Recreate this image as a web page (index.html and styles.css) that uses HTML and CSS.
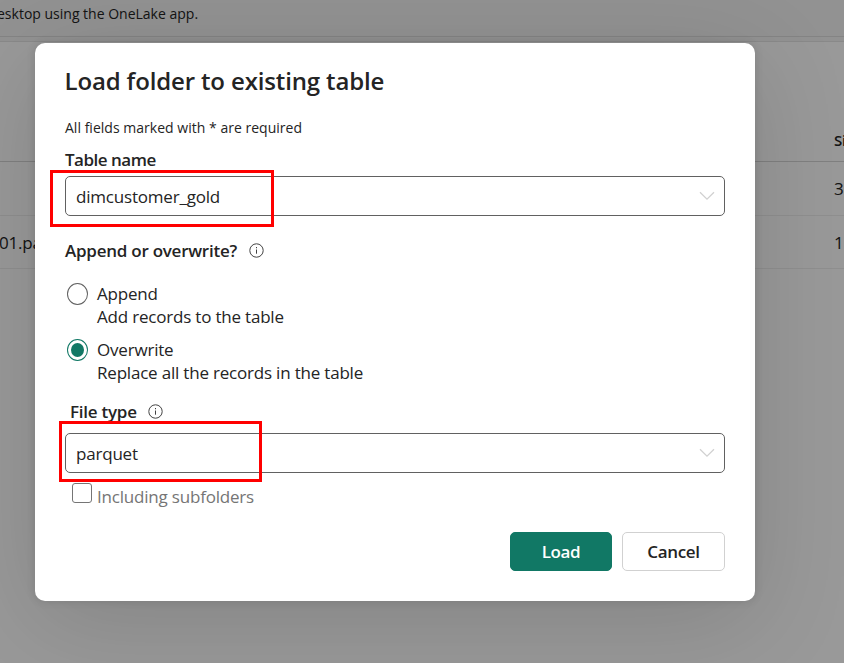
FILE: index.html
```html
<!DOCTYPE html>
<html lang="en">
<head>
<meta charset="utf-8">
<title>Load folder to existing table</title>
<link rel="stylesheet" href="styles.css">
</head>
<body>
<div class="page">
  <header class="notice"><span>esktop using the OneLake app.</span></header>
  <main class="files">
    <div class="row head"><span></span><span>Si</span></div>
    <div class="row first"><span></span><span>3</span></div>
    <div class="row second"><span class="name">01.pa</span><span>1</span></div>
  </main>
</div>
<div class="overlay">
  <section class="dialog" role="dialog" aria-labelledby="title">
    <h1 id="title">Load folder to existing table</h1>
    <p class="hint">All fields marked with * are required</p>
    <div class="label table-label">Table name</div>
    <div class="select">
      <span>dimcustomer_gold</span>
      <svg class="chevron" viewBox="0 0 16 10"><path d="M1 1.2 8 8.2 15 1.2"/></svg>
      <i class="mark mark-table"></i>
    </div>
    <div class="label mode-label"><span>Append or overwrite?</span>
      <svg class="info" viewBox="0 0 15 15"><circle cx="7.5" cy="7.5" r="6.7"/><path d="M7.5 6.5v4.2"/><path class="dot" d="M7 4.1h1v1.2H7z"/></svg>
    </div>
    <div class="option">
      <i class="radio"></i>
      <div><div>Append</div><div>Add records to the table</div></div>
    </div>
    <div class="option">
      <i class="radio checked"></i>
      <div><div>Overwrite</div><div>Replace all the records in the table</div></div>
    </div>
    <div class="label type-label"><span>File type</span>
      <svg class="info" viewBox="0 0 15 15"><circle cx="7.5" cy="7.5" r="6.7"/><path d="M7.5 6.5v4.2"/><path class="dot" d="M7 4.1h1v1.2H7z"/></svg>
    </div>
    <div class="select">
      <span>parquet</span>
      <svg class="chevron" viewBox="0 0 16 10"><path d="M1 1.2 8 8.2 15 1.2"/></svg>
      <i class="mark mark-type"></i>
    </div>
    <div class="check"><i class="box"></i><span>Including subfolders</span></div>
    <footer class="actions">
      <button class="btn primary">Load</button>
      <button class="btn">Cancel</button>
    </footer>
  </section>
</div>
</body>
</html>
```
FILE: styles.css
```css
* { box-sizing: border-box; }
html, body { height: 100%; }
body {
  margin: 0;
  overflow: hidden;
  font: 17px/23px "Open Sans", "Noto Sans", sans-serif;
  letter-spacing: -.2px;
  color: #242424;
}
.page {
  position: absolute;
  inset: 0;
  overflow: hidden;
  background: #f3f3f3;
}
.notice {
  height: 37px;
  padding: 2px 0 0;
  border-bottom: 1px solid #dcdcdc;
  background: #f3f3f3;
  font-size: 14px;
  letter-spacing: 0;
}
.notice span { display: inline-block; margin-left: -3px; }
.files {
  width: 860px;
  height: 640px;
  margin: 4px 0 0 -10px;
  padding-left: 9px;
  border: 1px solid #e4e4e4;
  background: #fff;
}
.row {
  display: grid;
  grid-template-columns: 834px 80px;
  align-items: center;
  border-bottom: 1px solid #efefef;
}
.row span { white-space: nowrap; }
.name { margin-left: -1px; }
.head { height: 120px; padding-top: 77px; border-color: #d6d6d6; font-size: 15px; font-weight: 600; }
.first { height: 54px; }
.second { height: 53px; }

.overlay {
  position: absolute;
  inset: 0;
  padding: 43px 0 0 35px;
  background: rgba(0, 0, 0, .4);
}
.dialog {
  width: 720px;
  height: 558px;
  padding: 22px 30px 0;
  border-radius: 10px;
  background: #fff;
  box-shadow: 0 0 10px rgba(0, 0, 0, .12), 0 20px 100px rgba(0, 0, 0, .14);
}
h1 { margin: 0 0 0 -.5px; font-size: 24px; line-height: 32px; font-weight: 600; letter-spacing: -.14px; }
.hint { margin: 20px 0 0; font-size: 14px; line-height: 22px; letter-spacing: .02px; }
.label { display: flex; align-items: center; height: 24px; font-weight: 600; letter-spacing: -.25px; }
.table-label { height: 22px; margin: 9px 0 6px; letter-spacing: -.5px; }
.mode-label { margin-top: 22px; margin-bottom: 20px; gap: 12px; }
.type-label { margin: 5px 0 10px 5px; gap: 11px; }
.info { width: 15px; height: 15px; fill: none; stroke: #424242; stroke-width: 1; }
.info .dot { fill: #424242; stroke: none; }
.select {
  position: relative;
  display: flex;
  align-items: center;
  justify-content: space-between;
  height: 40px;
  padding: 0 9px 0 10px;
  border: 1px solid #616161;
  border-radius: 5px;
}
.chevron { width: 16px; height: 10px; fill: none; stroke: #d1d1d1; stroke-width: 1.3; }
.mark { position: absolute; border: 3px solid #f00; }
.mark-table { left: -16px; top: -7px; width: 224px; height: 57px; }
.mark-type { left: -7px; top: -13px; width: 203px; height: 61px; }
.option { display: flex; gap: 9px; height: 56px; padding-left: 2px; }
.radio {
  flex: none;
  width: 21px;
  height: 22px;
  margin-top: 1px;
  border: 1px solid #616161;
  border-radius: 50%;
}
.radio.checked {
  padding: 3px;
  border-color: #117865;
}
.radio.checked::before {
  content: "";
  display: block;
  height: 100%;
  border-radius: 50%;
  background: #117865;
}
.check { display: flex; gap: 5px; height: 36px; padding: 10px 0 0 7px; color: #757575; }
.check span { margin-top: 2px; }
.box { width: 20px; height: 20px; border: 1px solid #757575; border-radius: 3px; }
.actions { display: flex; justify-content: flex-end; gap: 10px; margin-top: 23px; }
.btn {
  width: 103px;
  height: 39px;
  padding: 0;
  border: 1px solid #d1d1d1;
  border-radius: 5px;
  background: #fff;
  color: #242424;
  font: 600 17px/24px "Open Sans", "Noto Sans", sans-serif;
  letter-spacing: -.35px;
}
.primary { width: 102px; border-color: #117865; background: #117865; color: #fff; }
```
